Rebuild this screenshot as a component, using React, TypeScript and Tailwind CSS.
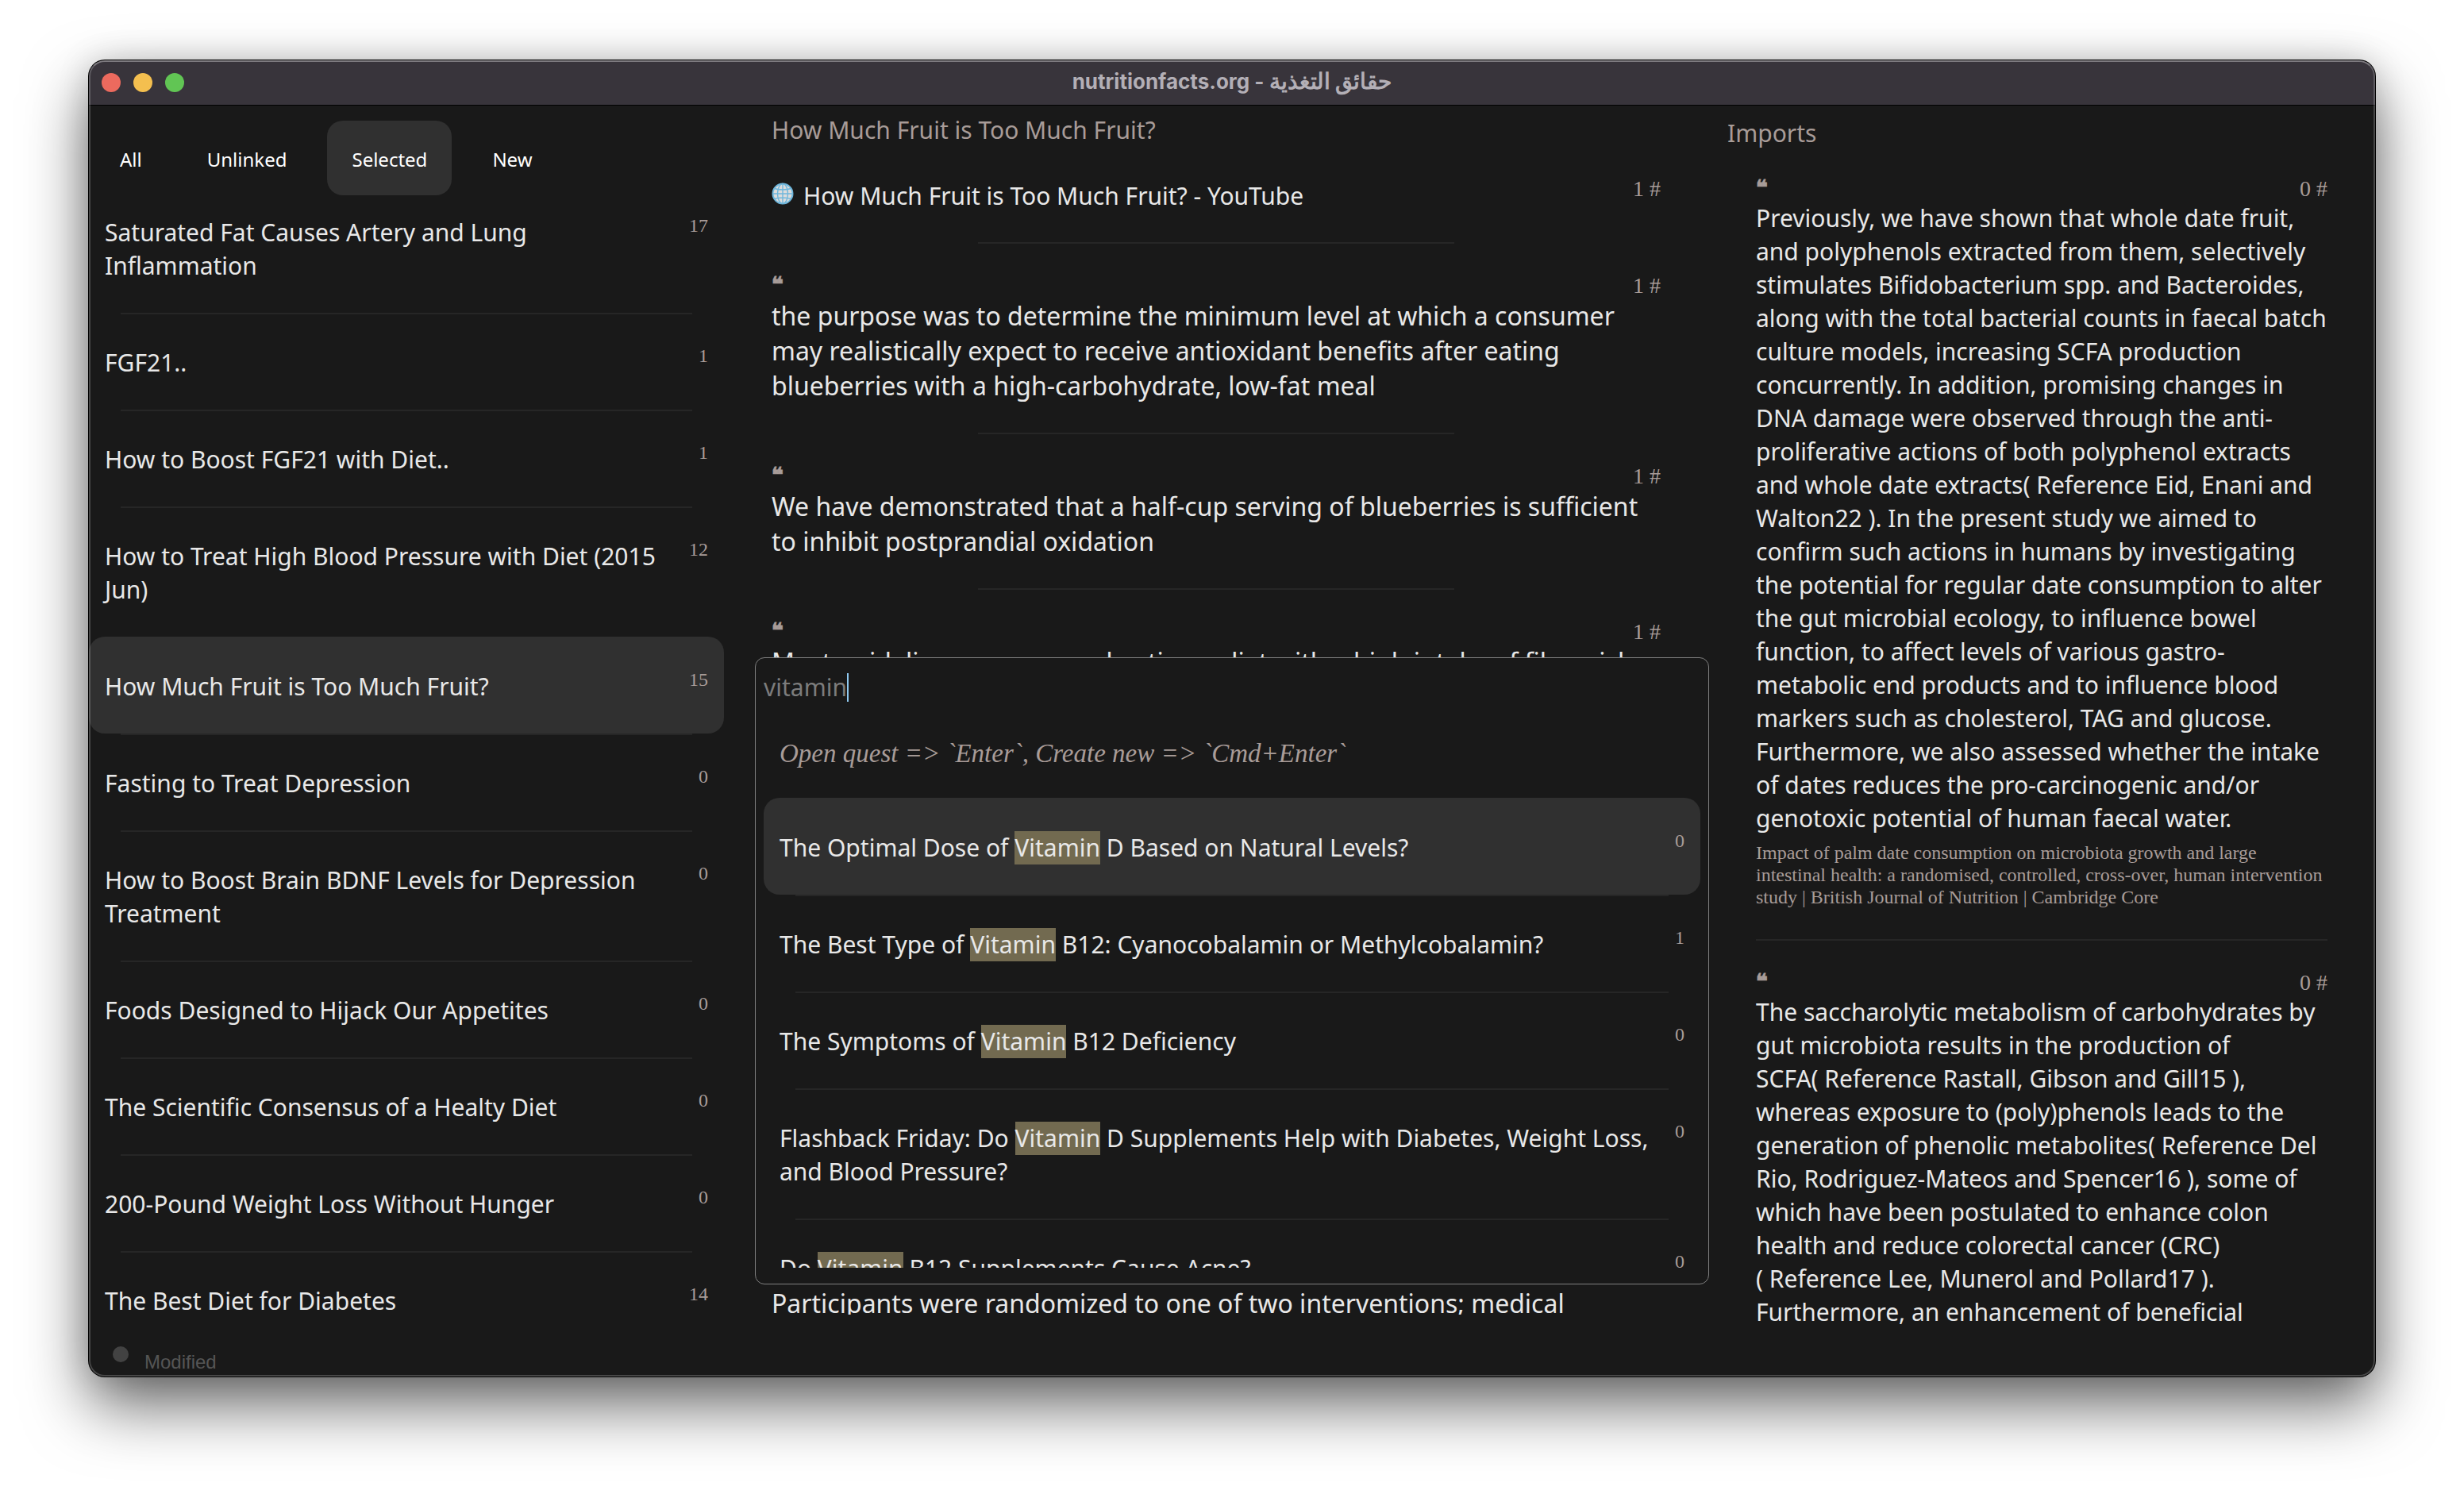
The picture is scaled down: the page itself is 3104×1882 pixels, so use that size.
import React from "react";

type Quest = { title: string; count: number; selected?: boolean };

const TABS = ["All", "Unlinked", "Selected", "New"];

const QUESTS: Quest[] = [
  { title: "FGF21..", count: 1 },
  { title: "How to Boost FGF21 with Diet..", count: 1 },
  { title: "How to Treat High Blood Pressure with Diet (2015 Jun)", count: 12 },
  { title: "How Much Fruit is Too Much Fruit?", count: 15, selected: true },
  { title: "Fasting to Treat Depression", count: 0 },
  { title: "How to Boost Brain BDNF Levels for Depression Treatment", count: 0 },
  { title: "Foods Designed to Hijack Our Appetites", count: 0 },
  { title: "The Scientific Consensus of a Healty Diet", count: 0 },
  { title: "200-Pound Weight Loss Without Hunger", count: 0 },
  { title: "The Best Diet for Diabetes", count: 14 },
];

const QUOTES = [
  "the purpose was to determine the minimum level at which a consumer may realistically expect to receive antioxidant benefits after eating blueberries with a high-carbohydrate, low-fat meal",
  "We have demonstrated that a half-cup serving of blueberries is sufficient to inhibit postprandial oxidation",
  "Most guidelines recommend eating a diet with a high intake of fiber-rich food including fruit. This is based on the many positive effects of fruit on human health.",
  "However some health professionals have concerns that fruit intake has a negative impact on glycemic control and therefore recommend restricting the fruit intake. We found no studies addressing this important clinical question.",
  "The objective was to investigate whether an advice to reduce the intake of fruit to patients with type 2 diabetes affects HbA1c, bodyweight, waist circumference and fruit intake. This was an open randomized controlled trial with two parallel groups.",
  "Participants were randomized to one of two interventions; medical nutrition therapy with advice to consume at least two pieces of fruit a day",
];

const RESULTS: Quest[] = [
  { title: "The Optimal Dose of Vitamin D Based on Natural Levels?", count: 0, selected: true },
  { title: "The Best Type of Vitamin B12: Cyanocobalamin or Methylcobalamin?", count: 1 },
  { title: "The Symptoms of Vitamin B12 Deficiency", count: 0 },
  {
    title: "Flashback Friday: Do Vitamin D Supplements Help with Diabetes, Weight Loss, and Blood Pressure?",
    count: 0,
  },
  { title: "Do Vitamin B12 Supplements Cause Acne?", count: 0 },
];

const IMPORTS = [
  {
    text: "Previously, we have shown that whole date fruit, and polyphenols extracted from them, selectively stimulates Bifidobacterium spp. and Bacteroides, along with the total bacterial counts in faecal batch culture models, increasing SCFA production concurrently. In addition, promising changes in DNA damage were observed through the anti-proliferative actions of both polyphenol extracts and whole date extracts(\u00a0Reference Eid, Enani and Walton22\u00a0). In the present study we aimed to confirm such actions in humans by investigating the potential for regular date consumption to alter the gut microbial ecology, to influence bowel function, to affect levels of various gastro-metabolic end products and to influence blood markers such as cholesterol, TAG and glucose. Furthermore, we also assessed whether the intake of dates reduces the pro-carcinogenic and/or genotoxic potential of human faecal water.",
    source:
      "Impact of palm date consumption on microbiota growth and large intestinal health: a randomised, controlled, cross-over, human intervention study | British Journal of Nutrition | Cambridge Core",
  },
  {
    text: "The saccharolytic metabolism of carbohydrates by gut microbiota results in the production of SCFA(\u00a0Reference Rastall, Gibson and Gill15\u00a0), whereas exposure to (poly)phenols leads to the generation of phenolic metabolites(\u00a0Reference Del Rio, Rodriguez-Mateos and Spencer16\u00a0), some of which have been postulated to enhance colon health and reduce colorectal cancer (CRC) (\u00a0Reference Lee, Munerol and Pollard17\u00a0). Furthermore, an enhancement of beneficial",
    source: "",
  },
];

function Highlighted({ text }: { text: string }) {
  return (
    <>
      {text.split(/(Vitamin)/).map((part, i) =>
        part === "Vitamin" ? (
          <mark key={i} className="inline-block bg-[#726a50] text-[#e8e8e8]">
            {part}
          </mark>
        ) : (
          part
        ),
      )}
    </>
  );
}

function QuestRow({ quest, line }: { quest: Quest; line: boolean }) {
  return (
    <li className="relative">
      <button
        type="button"
        className={
          quest.selected
            ? "flex w-full items-start gap-5 rounded-[20px] bg-[#303030] px-5 pt-[42px] pb-[38px] text-left"
            : "flex w-full items-start gap-5 px-5 pt-[42px] pb-[38px] text-left"
        }
      >
        <span className="flex-1 text-[30px] leading-[42px]">
          <Highlighted text={quest.title} />
        </span>
        <span className="font-['Liberation_Serif',serif] text-2xl leading-6 text-[#a89c98]">{quest.count}</span>
      </button>
      {line && <div className="absolute inset-x-10 top-full h-0.5 bg-[#262626]" />}
    </li>
  );
}

function QuestList({ quests }: { quests: Quest[] }) {
  return (
    <ul>
      {quests.map((q, i) => {
        const next = quests[i + 1];
        return <QuestRow key={q.title} quest={q} line={!!next && !next.selected} />;
      })}
    </ul>
  );
}

function QuoteHeader({ count }: { count: number }) {
  return (
    <div className="flex h-[29px] items-start justify-between font-['Liberation_Serif',serif] text-[28px] text-[#a89c98]">
      <span className="font-['DejaVu_Sans',sans-serif] text-[26px] leading-[22px] font-bold [-webkit-text-stroke:1px_#a89c98]">
        ❝
      </span>
      <span className="leading-[26px]">{count} #</span>
    </div>
  );
}

function Globe() {
  return (
    <svg viewBox="0 0 28 28" className="-mt-1.5 size-7 shrink-0" aria-hidden="true">
      <circle cx="14" cy="14" r="12.5" fill="#dcdcdc" stroke="#6fb7dc" strokeWidth="2" />
      <g fill="none" stroke="#6fb7dc" strokeWidth="1.4">
        <ellipse cx="14" cy="14" rx="6.5" ry="12.5" />
        <path d="M14 1.5v25M1.5 14h25M3.5 7.5q10.500 3 21 0M3.500 20.500q10.500 -3 21 0" />
      </g>
    </svg>
  );
}

function SearchPanel() {
  return (
    <div className="absolute -inset-x-px top-[695px] bottom-[62px] flex flex-col overflow-hidden rounded-xl border border-[#808080] bg-[#191919] px-2.5 pt-4 pb-5">
      <label className="flex h-[42px] shrink-0 items-center">
        <span className="sr-only">Search quests</span>
        <input
          type="text"
          defaultValue="vitamin"
          className="field-sizing-content bg-transparent text-[30px] leading-[42px] text-[#7c7c7c] outline-none"
        />
        <span className="h-9 w-0.5 bg-[#8fc9f0]" />
      </label>
      <p className="shrink-0 px-5 pt-[41px] pb-[35px] font-['Liberation_Serif',serif] text-[33px] leading-[42px] text-[#a89c98] italic">
        Open quest =&gt; `Enter`, Create new =&gt; `Cmd+Enter`
      </p>
      <div className="min-h-0 flex-1 overflow-hidden">
        <QuestList quests={RESULTS} />
      </div>
    </div>
  );
}

export default function App() {
  return (
    <div className="flex h-screen bg-white px-28 pt-[76px] pb-[148px] font-['Noto_Sans',sans-serif] text-[#e8e8e8]">
      <div className="relative flex min-w-0 flex-1 flex-col overflow-hidden rounded-[20px] bg-[#191919] shadow-[0_0_0_1px_#000,0_36px_80px_rgba(0,0,0,0.6),0_0_40px_rgba(0,0,0,0.15)]">
        <header className="grid h-[57px] shrink-0 grid-cols-[1fr_auto_1fr] items-center border-b border-black bg-[#38343b] px-4">
          <div className="flex gap-4">
            <button type="button" aria-label="Close" className="size-6 rounded-full bg-[#ec6a5e]" />
            <button type="button" aria-label="Minimize" className="size-6 rounded-full bg-[#f4bf4f]" />
            <button type="button" aria-label="Zoom" className="size-6 rounded-full bg-[#61c554]" />
          </div>
          <h1 className="pb-1 font-['Inter','Noto_Sans',sans-serif] text-[26px] leading-8 font-bold text-[#b3afb6]">
            nutritionfacts.org - <span className="text-[28px]">حقائق التغذية</span>
          </h1>
        </header>

        <main className="grid min-h-0 flex-1 grid-cols-[840fr_1220fr_820fr] grid-rows-[minmax(0,1fr)]">
          <section className="flex min-h-0 flex-col pr-10">
            <nav className="flex shrink-0 gap-5 px-2 pt-[19px]">
              {TABS.map((t) => (
                <button
                  key={t}
                  type="button"
                  className={
                    t === "Selected"
                      ? "rounded-[20px] bg-[#303030] px-[31px] pt-8 pb-7 text-2xl leading-[34px] text-white"
                      : "rounded-[20px] px-[31px] pt-8 pb-7 text-2xl leading-[34px] text-white"
                  }
                >
                  {t}
                </button>
              ))}
            </nav>
            <div className="min-h-0 flex-1 overflow-hidden">
              <div className="relative flex items-start gap-5 px-5 pt-[26px] pb-[38px]">
                <span className="flex-1 text-[30px] leading-[42px]">Saturated Fat Causes Artery and Lung Inflammation</span>
                <span className="font-['Liberation_Serif',serif] text-2xl leading-6 text-[#a89c98]">17</span>
                <div className="absolute inset-x-10 top-full h-0.5 bg-[#262626]" />
              </div>
              <QuestList quests={QUESTS} />
            </div>
          </section>

          <section className="relative mr-5 min-h-0 pb-6">
            <div className="h-full overflow-hidden pr-[60px] pl-5">
              <h2 className="pt-3 text-[30px] leading-[38px] text-[#a89c98]">How Much Fruit is Too Much Fruit?</h2>
              <article className="relative flex items-start justify-between pt-[42px] pb-[38px]">
                <a href="#video" className="flex items-center gap-3 text-[30px] leading-[44px]">
                  <Globe />
                  How Much Fruit is Too Much Fruit? - YouTube
                </a>
                <span className="font-['Liberation_Serif',serif] text-[28px] leading-[26px] text-[#a89c98]">1 #</span>
                <div className="absolute bottom-0 left-1/2 h-0.5 w-[600px] -translate-x-1/2 bg-[#262626]" />
              </article>
              {QUOTES.map((q) => (
                <article key={q} className="relative pt-10 pb-[39px]">
                  <QuoteHeader count={1} />
                  <p className="text-[32px] leading-[44px]">{q}</p>
                  <div className="absolute bottom-0 left-1/2 h-0.5 w-[600px] -translate-x-1/2 bg-[#262626]" />
                </article>
              ))}
            </div>
            <SearchPanel />
          </section>

          <section className="min-h-0 overflow-hidden">
            <h2 className="pt-[18px] pl-1 text-[30px] leading-[34px] text-[#a89c98]">Imports</h2>
            <div className="pr-[60px] pl-10">
              {IMPORTS.map((item) => (
                <article key={item.text} className="relative pt-10 pb-[39px]">
                  <QuoteHeader count={0} />
                  <p className="text-[30px] leading-[42px]">{item.text}</p>
                  {item.source && (
                    <a
                      href="#source"
                      className="mt-2 mb-0.5 block font-['Liberation_Serif',serif] text-2xl leading-7 text-[#a89c98]"
                    >
                      {item.source}
                    </a>
                  )}
                  {item.source && <div className="absolute inset-x-0 bottom-0 h-0.5 bg-[#262626]" />}
                </article>
              ))}
            </div>
          </section>
        </main>

        <footer className="flex h-[54px] shrink-0 items-start gap-5 pl-[30px]">
          <span className="mt-4 size-5 rounded-full bg-[#424242]" />
          <span className="mt-[22px] font-['Liberation_Sans',sans-serif] text-2xl leading-7 text-[#555555]">Modified</span>
        </footer>

        <div className="pointer-events-none absolute inset-0 rounded-[20px] border-2 border-white/20 border-t-white/35" />
      </div>
    </div>
  );
}
